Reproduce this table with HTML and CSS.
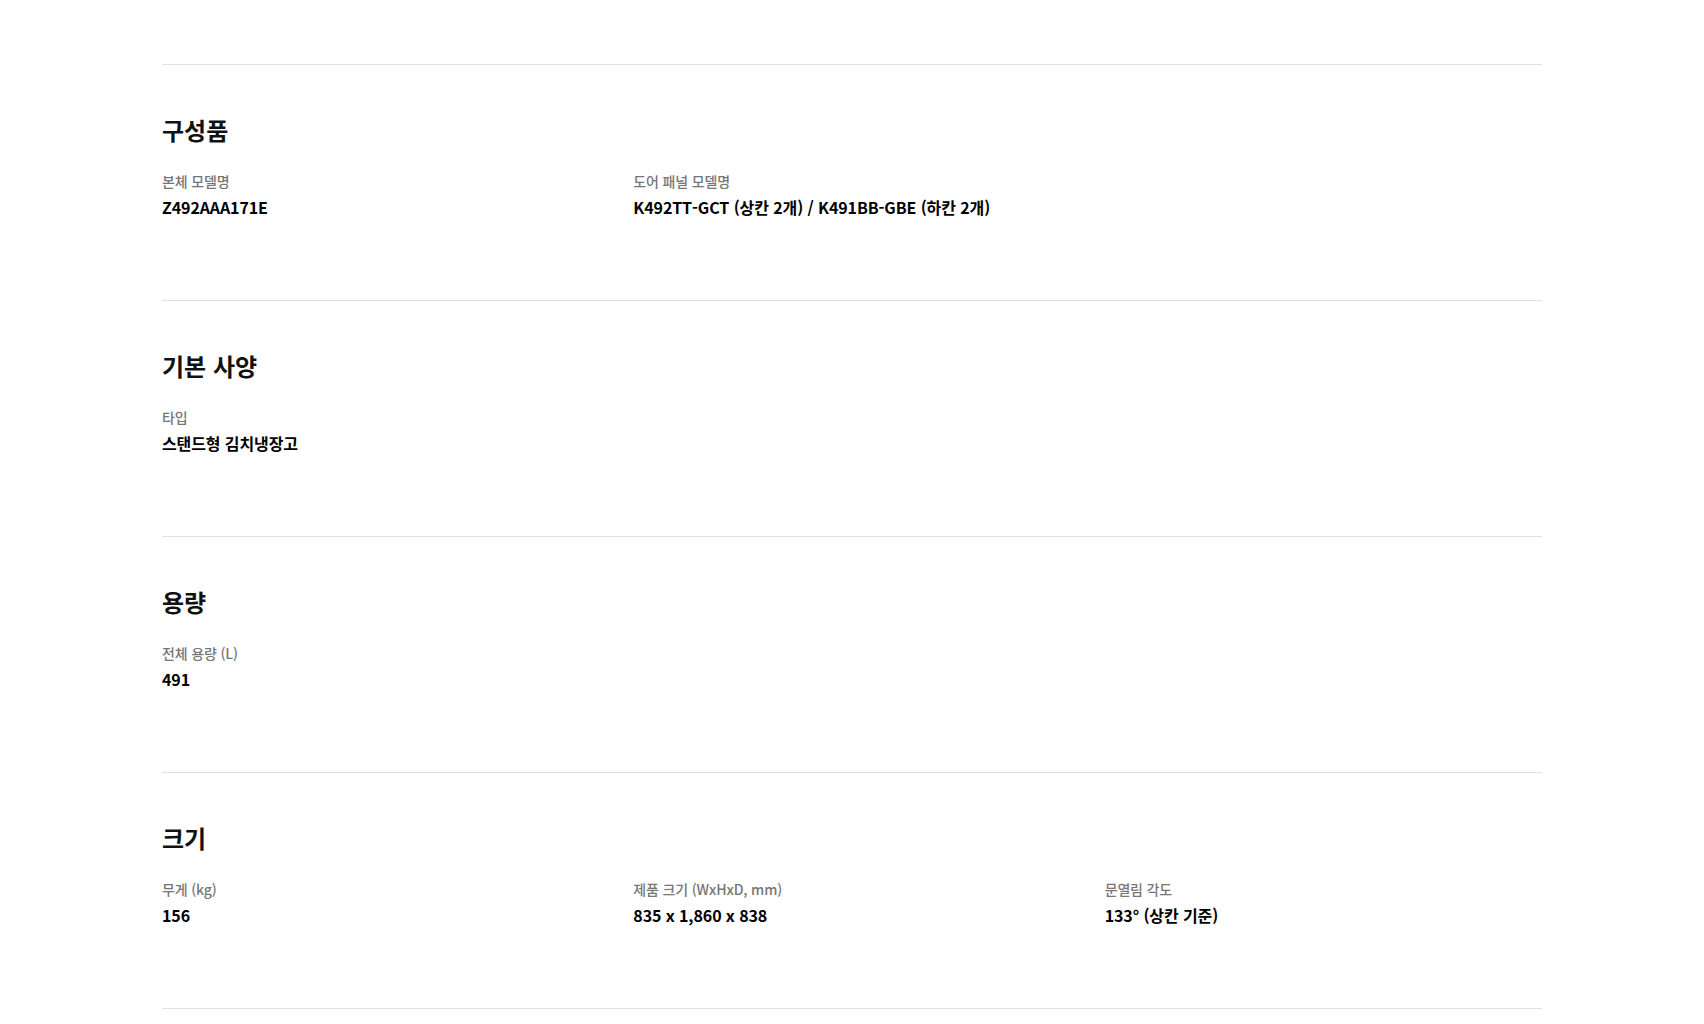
FILE: index.html
```html
<!DOCTYPE html>
<html lang="ko">
<head>
  <meta charset="UTF-8">
  <meta name="viewport" content="width=device-width, initial-scale=1.0">
  <title>제품 사양</title>
  <link rel="stylesheet" href="styles.css">
</head>
<body>
  <div class="spec">

    <div class="section">
      <h2>구성품</h2>
      <div class="grid">
        <div class="item">
          <p class="label">본체 모델명</p>
          <p class="value">Z492AAA171E</p>
        </div>
        <div class="item">
          <p class="label">도어 패널 모델명</p>
          <p class="value">K492TT-GCT (상칸 2개) / K491BB-GBE (하칸 2개)</p>
        </div>
      </div>
    </div>

    <div class="section">
      <h2>기본 사양</h2>
      <div class="grid">
        <div class="item">
          <p class="label">타입</p>
          <p class="value">스탠드형 김치냉장고</p>
        </div>
      </div>
    </div>

    <div class="section">
      <h2>용량</h2>
      <div class="grid">
        <div class="item">
          <p class="label">전체 용량 (L)</p>
          <p class="value">491</p>
        </div>
      </div>
    </div>

    <div class="section">
      <h2>크기</h2>
      <div class="grid">
        <div class="item">
          <p class="label">무게 (kg)</p>
          <p class="value">156</p>
        </div>
        <div class="item">
          <p class="label">제품 크기 (WxHxD, mm)</p>
          <p class="value">835 x 1,860 x 838</p>
        </div>
        <div class="item">
          <p class="label">문열림 각도</p>
          <p class="value">133° (상칸 기준)</p>
        </div>
      </div>
    </div>

  </div>
</body>
</html>
```

FILE: styles.css
```css
body {
  margin: 0;
  font-family: "Noto Sans CJK KR", "Noto Sans", sans-serif;
  color: #000;
  background: #fff;
}

.spec {
  width: 1380px;
  margin: 64px auto 0;
  border-bottom: 1px solid #e0e0e0;
}

.section {
  border-top: 1px solid #e0e0e0;
  height: 236px;
  padding-top: 48px;
  box-sizing: border-box;
}

.section h2 {
  margin: 0 0 24px;
  font-size: 24px;
  line-height: 34px;
  font-weight: 700;
  color: #111;
}

.grid {
  display: grid;
  grid-template-columns: repeat(3, 1fr);
  column-gap: 34px;
}

.label {
  margin: 0;
  font-size: 14px;
  line-height: 20px;
  font-weight: 500;
  letter-spacing: -0.15px;
  color: #767676;
}

.value {
  margin: 4px 0 0;
  font-size: 16px;
  line-height: 24px;
  font-weight: 700;
  letter-spacing: -0.1px;
  color: #000;
}
```
